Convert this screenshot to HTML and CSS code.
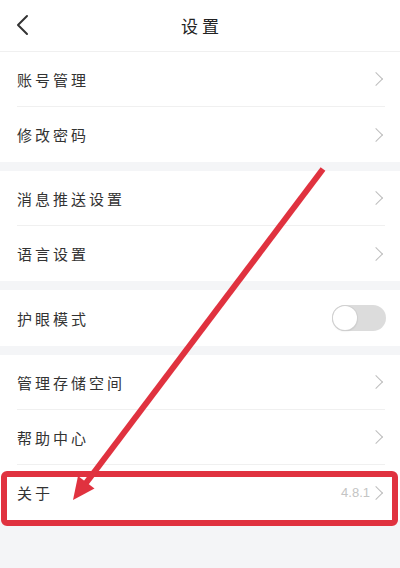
FILE: index.html
```html
<!DOCTYPE html>
<html lang="zh-CN">
<head>
<meta charset="utf-8">
<title>设置</title>
<link rel="stylesheet" href="styles.css">
</head>
<body>
<div class="page">
  <header class="header">
    <svg class="back" width="14" height="22" viewBox="0 0 14 22"><path d="M11 2 L2 11 L11 20" fill="none" stroke="#333" stroke-width="2" stroke-linecap="round" stroke-linejoin="round"/></svg>
    <h1 class="title">设置</h1>
  </header>

  <section class="group">
    <div class="row"><span class="label">账号管理</span><span class="chev"></span></div>
    <div class="row"><span class="label">修改密码</span><span class="chev"></span></div>
  </section>

  <section class="group">
    <div class="row"><span class="label">消息推送设置</span><span class="chev"></span></div>
    <div class="row"><span class="label">语言设置</span><span class="chev"></span></div>
  </section>

  <section class="group">
    <div class="row single"><span class="label">护眼模式</span><span class="toggle"><span class="knob"></span></span></div>
  </section>

  <section class="group">
    <div class="row"><span class="label">管理存储空间</span><span class="chev"></span></div>
    <div class="row"><span class="label">帮助中心</span><span class="chev"></span></div>
    <div class="row"><span class="label">关于</span><span class="right"><span class="version">4.8.1</span><span class="chev"></span></span></div>
  </section>

  <svg class="annot" width="400" height="568" viewBox="0 0 400 568">
    <rect x="4" y="474" width="391" height="49" rx="3" fill="none" stroke="#e0323f" stroke-width="6"/>
    <line x1="323" y1="169" x2="86" y2="483" stroke="#e0323f" stroke-width="6"/>
    <polygon points="73,500 94.5,488.5 78,476" fill="#e0323f"/>
  </svg>
</div>
</body>
</html>
```

FILE: styles.css
```css
html, body {
  margin: 0;
  padding: 0;
}
body {
  background: #f4f5f7;
  font-family: "Noto Sans CJK SC", "Noto Sans", sans-serif;
  color: #333;
}
.page {
  position: relative;
  width: 400px;
  height: 568px;
  overflow: hidden;
  display: flex;
  flex-direction: column;
  gap: 9px;
}
.header {
  position: relative;
  height: 51px;
  flex: none;
  background: #fff;
  border-bottom: 1px solid #f0f0f0;
  display: flex;
  align-items: center;
  justify-content: center;
  margin-bottom: -9px;
}
.back {
  position: absolute;
  left: 16px;
  top: 14px;
}
.title {
  margin: 0;
  font-size: 17px;
  font-weight: 400;
  letter-spacing: 4px;
  margin-right: -4px;
  color: #222;
}
.group {
  background: #fff;
  padding: 0 15px 0 17px;
  flex: none;
}
.row {
  box-sizing: border-box;
  height: 55px;
  display: flex;
  align-items: center;
  justify-content: space-between;
  border-bottom: 1px solid #f0f0f0;
}
.row:last-child {
  border-bottom: none;
}
.row.single {
  height: 56px;
}
.label {
  font-size: 15px;
  letter-spacing: 3px;
  color: #333;
}
.chev {
  width: 9px;
  height: 9px;
  border-top: 1.3px solid #bdbdbd;
  border-right: 1.3px solid #bdbdbd;
  transform: rotate(45deg);
  margin-right: 4px;
}
.right {
  display: flex;
  align-items: center;
  gap: 0;
}
.version {
  font-size: 13px;
  color: #c4c4c4;
  font-family: "Liberation Sans", sans-serif;
  margin-right: 1px;
}
.toggle {
  width: 54px;
  height: 26px;
  border-radius: 13px;
  background: #dcdcdc;
  position: relative;
  margin-right: -1px;
}
.knob {
  position: absolute;
  left: 1px;
  top: 1px;
  width: 24px;
  height: 24px;
  border-radius: 50%;
  background: #fff;
  box-shadow: 0 0 0 1px #d0d0d0, 0 1px 2px rgba(0,0,0,0.15);
}
.annot {
  position: absolute;
  left: 0;
  top: 0;
  pointer-events: none;
}
```
